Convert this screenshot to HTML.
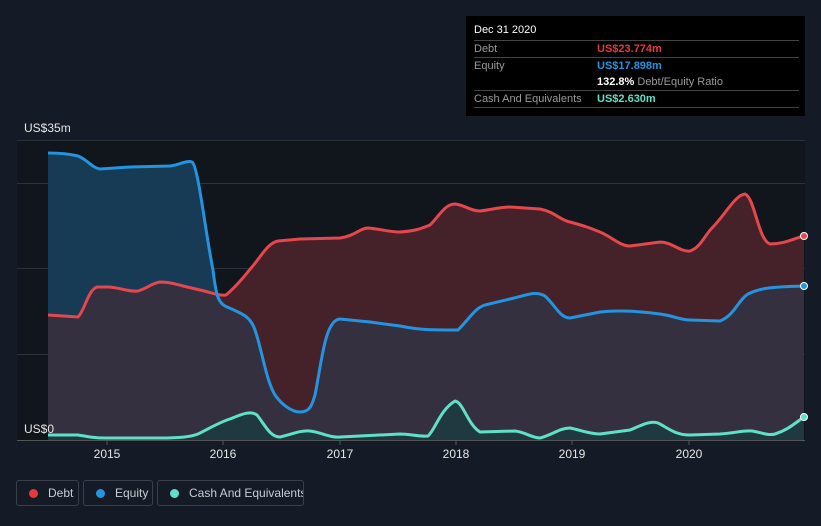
<!DOCTYPE html><html><head><meta charset="utf-8"><style>
html,body{margin:0;width:821px;height:526px;overflow:hidden}
body{background:#151b26;font-family:"Liberation Sans",sans-serif;position:relative}
.tip{position:absolute;left:466px;top:16px;width:339px;height:100px;background:#000;color:#fff;font-size:11px}
.row{position:absolute;left:8px;width:325px;border-top:1px solid #444;height:16px;line-height:16px}
.l{color:#999;position:absolute;left:0}.v{position:absolute;left:123px;font-weight:bold}
.leg{position:absolute;top:480px;height:26px;border:1px solid #3a404a;border-radius:3px;color:#c8ccd2;font-size:12px;line-height:24px;box-sizing:border-box;white-space:nowrap;overflow:hidden}
.dot{display:inline-block;width:9px;height:9px;border-radius:50%;margin:0 10px 0 12px;vertical-align:-1px}
</style></head><body>
<svg width="821" height="526" style="position:absolute;left:0;top:0">
<defs><clipPath id="eq"><path d="M48,153 C60,153 70,154 78,156 C88,160 92,168 100,169 L130,167 L170,166 C180,165 186,160 192,162 C198,165 205,230 213,270 C216,295 218,302 225,306 C240,313 250,315 255,330 C262,350 266,380 275,395 C282,405 292,412 300,412 C310,412 312,405 315,395 C322,360 325,320 340,319 L370,322 L400,326 C420,330 430,330 458,330 C470,318 475,308 485,305 L510,299 C525,296 535,290 545,296 C555,305 560,318 570,318 L600,312 C615,310 640,311 660,314 C675,316 680,320 690,320 L720,321 C735,315 738,300 748,294 C760,288 770,287 804,286 L804,440 L48,440Z"/></clipPath></defs>
<rect x="17" y="140" width="788" height="300" fill="#11151c"/>
<g stroke="#2c323c" stroke-width="1"><line x1="17" y1="140.5" x2="805" y2="140.5"/><line x1="17" y1="183.5" x2="805" y2="183.5"/><line x1="17" y1="268.5" x2="805" y2="268.5"/><line x1="17" y1="354.5" x2="805" y2="354.5"/><line x1="17" y1="440.5" x2="805" y2="440.5" stroke="#555"/></g>
<path d="M48,315 L78,317 C85,310 88,290 97,287 L110,287 C125,289 130,292 138,291 C148,288 152,283 160,282 C170,282 175,284 183,286 L200,290 C210,292 218,296 226,295 C238,285 245,275 252,267 C262,255 268,243 278,241 L300,239 L340,238 C355,236 360,228 368,228 C380,229 390,232 400,232 C415,231 420,229 430,225 C440,215 445,204 455,204 C465,205 470,211 480,211 C490,210 500,207 510,207 L540,209 C555,212 560,220 570,222 C585,226 590,228 600,232 C612,237 620,246 630,246 L660,242 C672,242 680,252 690,251 C700,248 705,235 712,228 C725,215 735,195 745,194 C755,198 758,240 770,244 C785,244 795,238 804,236 L804,440 L48,440Z" fill="#45222a"/>
<path d="M48,153 C60,153 70,154 78,156 C88,160 92,168 100,169 L130,167 L170,166 C180,165 186,160 192,162 C198,165 205,230 213,270 C216,295 218,302 225,306 L225,440 L48,440Z" fill="#173a55"/>
<g clip-path="url(#eq)"><path d="M48,315 L78,317 C85,310 88,290 97,287 L110,287 C125,289 130,292 138,291 C148,288 152,283 160,282 C170,282 175,284 183,286 L200,290 C210,292 218,296 226,295 C238,285 245,275 252,267 C262,255 268,243 278,241 L300,239 L340,238 C355,236 360,228 368,228 C380,229 390,232 400,232 C415,231 420,229 430,225 C440,215 445,204 455,204 C465,205 470,211 480,211 C490,210 500,207 510,207 L540,209 C555,212 560,220 570,222 C585,226 590,228 600,232 C612,237 620,246 630,246 L660,242 C672,242 680,252 690,251 C700,248 705,235 712,228 C725,215 735,195 745,194 C755,198 758,240 770,244 C785,244 795,238 804,236 L804,440 L48,440Z" fill="#34303f"/></g>
<path d="M48,435 L78,435 C90,437 95,438 105,438 L160,438 C180,438 190,437 198,434 C210,428 220,422 230,419 C240,415 250,410 257,415 C265,425 270,437 280,437 C290,435 300,430 310,431 C320,432 330,438 340,437 L400,434 C410,434 420,437 428,436 C435,430 440,410 455,401 C463,402 468,425 480,432 L515,431 C525,432 532,438 540,438 C552,435 560,428 570,428 C580,430 590,434 600,434 L630,430 C640,426 650,420 658,423 C668,428 675,435 690,435 L720,434 C735,433 745,430 752,431 C760,432 768,436 775,434 C788,430 795,423 804,417 L804,440 L48,440Z" fill="#1e3a3f" opacity=".9"/>
<g fill="none" stroke-width="3">
<path d="M48,315 L78,317 C85,310 88,290 97,287 L110,287 C125,289 130,292 138,291 C148,288 152,283 160,282 C170,282 175,284 183,286 L200,290 C210,292 218,296 226,295 C238,285 245,275 252,267 C262,255 268,243 278,241 L300,239 L340,238 C355,236 360,228 368,228 C380,229 390,232 400,232 C415,231 420,229 430,225 C440,215 445,204 455,204 C465,205 470,211 480,211 C490,210 500,207 510,207 L540,209 C555,212 560,220 570,222 C585,226 590,228 600,232 C612,237 620,246 630,246 L660,242 C672,242 680,252 690,251 C700,248 705,235 712,228 C725,215 735,195 745,194 C755,198 758,240 770,244 C785,244 795,238 804,236" stroke="#e5474d"/>
<path d="M48,153 C60,153 70,154 78,156 C88,160 92,168 100,169 L130,167 L170,166 C180,165 186,160 192,162 C198,165 205,230 213,270 C216,295 218,302 225,306 C240,313 250,315 255,330 C262,350 266,380 275,395 C282,405 292,412 300,412 C310,412 312,405 315,395 C322,360 325,320 340,319 L370,322 L400,326 C420,330 430,330 458,330 C470,318 475,308 485,305 L510,299 C525,296 535,290 545,296 C555,305 560,318 570,318 L600,312 C615,310 640,311 660,314 C675,316 680,320 690,320 L720,321 C735,315 738,300 748,294 C760,288 770,287 804,286" stroke="#2394df"/>
<path d="M48,435 L78,435 C90,437 95,438 105,438 L160,438 C180,438 190,437 198,434 C210,428 220,422 230,419 C240,415 250,410 257,415 C265,425 270,437 280,437 C290,435 300,430 310,431 C320,432 330,438 340,437 L400,434 C410,434 420,437 428,436 C435,430 440,410 455,401 C463,402 468,425 480,432 L515,431 C525,432 532,438 540,438 C552,435 560,428 570,428 C580,430 590,434 600,434 L630,430 C640,426 650,420 658,423 C668,428 675,435 690,435 L720,434 C735,433 745,430 752,431 C760,432 768,436 775,434 C788,430 795,423 804,417" stroke="#5fe0c8"/>
</g>
<circle cx="804" cy="236" r="3.5" fill="#e5474d" stroke="#fff" stroke-width="1"/>
<circle cx="804" cy="286" r="3.5" fill="#2394df" stroke="#fff" stroke-width="1"/>
<circle cx="804" cy="417" r="3.5" fill="#5fe0c8" stroke="#fff" stroke-width="1"/>
<g stroke="#555"><line x1="107" y1="440" x2="107" y2="445"/><line x1="223" y1="440" x2="223" y2="445"/><line x1="340" y1="440" x2="340" y2="445"/><line x1="456" y1="440" x2="456" y2="445"/><line x1="572" y1="440" x2="572" y2="445"/><line x1="689" y1="440" x2="689" y2="445"/></g>
<g fill="#e6e6e6" font-size="12" text-anchor="middle"><text x="107" y="458">2015</text><text x="223" y="458">2016</text><text x="340" y="458">2017</text><text x="456" y="458">2018</text><text x="572" y="458">2019</text><text x="689" y="458">2020</text></g>
<text x="24" y="132" fill="#e6e6e6" font-size="12">US$35m</text>
<text x="24" y="433" fill="#e6e6e6" font-size="12">US$0</text>
</svg>
<div class="tip">
<div style="position:absolute;left:8px;top:8px">Dec 31 2020</div>
<div class="row" style="top:24px"><span class="l">Debt</span><span class="v" style="color:#e5393f">US$23.774m</span></div>
<div class="row" style="top:41px"><span class="l">Equity</span><span class="v" style="color:#2394df">US$17.898m</span></div>
<div class="row" style="top:58px;border:0"><span class="v">132.8% <span style="color:#999;font-weight:normal">Debt/Equity Ratio</span></span></div>
<div class="row" style="top:74px"><span class="l">Cash And Equivalents</span><span class="v" style="color:#5fe0c8">US$2.630m</span></div>
<div class="row" style="top:91px;height:0"></div>
</div>
<div class="leg" style="left:16px;width:63px"><span class="dot" style="background:#e5393f"></span>Debt</div>
<div class="leg" style="left:83px;width:70px"><span class="dot" style="background:#2394df"></span>Equity</div>
<div class="leg" style="left:157px;width:147px"><span class="dot" style="background:#5fe0c8"></span>Cash And Equivalents</div>
</body></html>
